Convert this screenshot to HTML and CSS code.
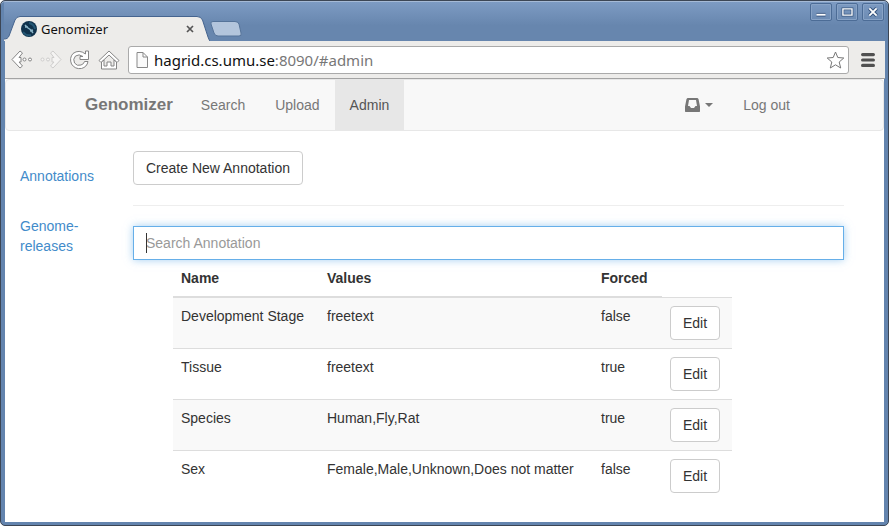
FILE: index.html
```html
<!DOCTYPE html>
<html lang="en">
<head>
<meta charset="utf-8">
<title>Genomizer</title>
<link rel="stylesheet" href="styles.css">
</head>
<body>
<div class="window">
  <header class="titlebar">
    <div class="tab">
      <svg class="tab-shape" viewBox="0 0 206 25" preserveAspectRatio="none" aria-hidden="true">
        <path d="M0 25V23C3 23 4 22 5 20L11 4Q12.500 .5 16 .5H193Q197 .5 198.500 4L204 21Q205 24 206 25Z" fill="#edecea"/>
        <path d="M0 23C3 23 4 22 5 20L11 4Q12.500 .5 16 .5H193Q197 .5 198.500 4L204 21Q205 24 206 25" fill="none" stroke="#45648f"/>
      </svg>
      <svg class="favicon" viewBox="0 0 16 16" aria-hidden="true">
        <circle cx="8" cy="8" r="8" fill="#10324c"/>
        <path d="M2 11Q5 15 10 14M8 2Q13 3 14 8" stroke="#245775" stroke-width="2" fill="none"/>
        <path d="M4 4L7 7L10 9L12 12M4 6L7 6M9 10L12 9" stroke="#8bb5c8" stroke-width="1.500" fill="none"/>
      </svg>
      <span class="tab-title">Genomizer</span>
      <button class="tab-close" aria-label="Close tab"><svg viewBox="0 0 8 8"><path d="M1 1L7 7M7 1L1 7" stroke="#555" stroke-width="1.700"/></svg></button>
    </div>
    <button class="new-tab" aria-label="New tab"><svg viewBox="0 0 32 16"><path d="M3 .5H25Q28 .5 29 3L31 12Q32 15 29 15H8Q5 15 4 12L1 3Q0 .5 3 .5Z" fill="#b3c5dc" stroke="#557399"/></svg></button>
    <div class="window-buttons">
      <button aria-label="Minimize"><svg viewBox="0 0 22 16"><path d="M6 11H16" stroke="#36547d" stroke-width="4"/><path d="M6 11H16" stroke="#fff" stroke-width="2"/></svg></button>
      <button aria-label="Maximize"><svg viewBox="0 0 22 16"><path d="M6.500 4.500H16.500V11.500H6.500Z" stroke="#36547d" stroke-width="3" fill="none"/><path d="M6.500 4.500H16.500V11.500H6.500Z" stroke="#fff" stroke-width="1.500" fill="none"/></svg></button>
      <button aria-label="Close"><svg viewBox="0 0 22 16"><path d="M7 4L15 12M15 4L7 12" stroke="#36547d" stroke-width="4"/><path d="M7 4L15 12M15 4L7 12" stroke="#fff" stroke-width="2"/></svg></button>
    </div>
  </header>

  <div class="toolbar">
    <button class="tool" aria-label="Back"><svg viewBox="0 0 22 20"><g fill="#fff" stroke="#858585"><path d="M9 1L1 9.500L9 18L11.500 16L8 12H10V7.500H8L11.500 3Z"/><circle cx="13.500" cy="9.500" r="1.500"/><circle cx="19" cy="9.500" r="1.500"/></g></svg></button>
    <button class="tool" aria-label="Forward"><svg viewBox="0 0 22 20"><g fill="#f5f4f3" stroke="#cecdcc"><path d="M13 1L21 9.500L13 18L10.500 16L14 12H12V7.500H14L10.500 3Z"/><circle cx="8" cy="9.500" r="1.500"/><circle cx="2.500" cy="9.500" r="1.500"/></g></svg></button>
    <button class="tool" aria-label="Reload"><svg viewBox="0 0 22 20"><path d="M16.500 4V1H19.500V9.500H11V6.500H14Q10 3.500 6.500 6Q3.500 9 5.500 13Q8 16.500 12 15Q15 14 15.500 11.500H19Q18 17 12.500 18.500Q6 19.500 2.500 14Q0 8 4 3.500Q10-1 16.500 4Z" fill="#fff" stroke="#858585"/></svg></button>
    <button class="tool" aria-label="Home"><svg viewBox="0 0 22 20"><path d="M1 10.500L11 1L21 10.500L19 12.500L11 5L3 12.500Z" fill="#fff" stroke="#858585"/><path d="M3.500 12V19H18.500V12L16 10V16H13V12H9V16H6V10Z" fill="#fff" stroke="#858585"/></svg></button>
    <div class="address">
      <svg class="page-icon" viewBox="0 0 12 16" aria-hidden="true"><path d="M1 .5H7L11.500 5V15.500H1ZM7 .5V5H11.500" fill="#fafafa" stroke="#888"/></svg>
      <span class="url">hagrid.cs.umu.se<span class="path">:8090/#admin</span></span>
      <button class="star" aria-label="Bookmark"><svg viewBox="0 0 18 18"><path d="M9 1L11.300 6.500L17.300 7L12.700 11L14.200 17L9 13.800L3.800 17L5.300 11L.7 7L6.700 6.500Z" fill="#fff" stroke="#777" stroke-linejoin="round"/></svg></button>
    </div>
    <button class="menu" aria-label="Menu"><svg viewBox="0 0 13 13"><path d="M1.500 1.500H11.500M1.500 6.500H11.500M1.500 11.500H11.500" stroke="#505050" stroke-width="3" stroke-linecap="round"/></svg></button>
  </div>

  <div class="page">
    <nav class="navbar">
      <a class="brand" href="#">Genomizer</a>
      <a href="#search">Search</a>
      <a href="#upload">Upload</a>
      <a class="active" href="#admin">Admin</a>
      <a class="inbox" href="#inbox" aria-label="Inbox">
        <svg class="inbox-icon" viewBox="0 0 15 14"><path fill-rule="evenodd" d="M2.500 0H12.500L13.500 1L15 8.500V13.500L14.500 14H.5L0 13.500V8.500L1.500 1ZM4 2L3 8H4.500L6 10H9L10.500 8H12L11 2Z" fill="#777"/></svg>
        <svg class="caret" viewBox="0 0 8 4"><path d="M0 0H8L4 4Z" fill="#777"/></svg>
      </a>
      <a class="logout" href="#logout">Log out</a>
    </nav>

    <div class="content">
      <aside class="sidebar">
        <a href="#annotations">Annotations</a>
        <a href="#genome-releases">Genome-releases</a>
      </aside>
      <main class="main">
        <button class="btn">Create New Annotation</button>
        <hr>
        <div class="search">
          <input type="text" placeholder="Search Annotation" aria-label="Search Annotation">
          <span class="cursor"></span>
        </div>
        <table>
          <colgroup><col class="c-name"><col class="c-values"><col class="c-forced"><col class="c-edit"></colgroup>
          <thead><tr><th>Name</th><th>Values</th><th>Forced</th></tr></thead>
          <tbody>
            <tr><td>Development Stage</td><td>freetext</td><td>false</td><td><button class="btn">Edit</button></td></tr>
            <tr><td>Tissue</td><td>freetext</td><td>true</td><td><button class="btn">Edit</button></td></tr>
            <tr><td>Species</td><td>Human,Fly,Rat</td><td>true</td><td><button class="btn">Edit</button></td></tr>
            <tr><td>Sex</td><td>Female,Male,Unknown,Does not matter</td><td>false</td><td><button class="btn">Edit</button></td></tr>
          </tbody>
        </table>
      </main>
    </div>
  </div>
</div>
</body>
</html>
```
FILE: styles.css
```css
* { box-sizing: border-box; }

body {
  margin: 0;
  font: 14px/20px "Liberation Sans", Arial, sans-serif;
  color: #333;
}

a { color: #428bca; text-decoration: none; }
button { font: inherit; color: inherit; }
svg { display: block; }

.window {
  min-height: 100vh;
  display: flex;
  flex-direction: column;
  padding: 0 3px 3px;
  border: 1px solid #3c4655;
  border-radius: 5px;
  background: #6384ae;
  box-shadow: inset 0 1px #a5bad6;
}

/* Title bar */
.titlebar {
  height: 39px;
  display: flex;
  align-items: flex-end;
  background: linear-gradient(#7d9bc3, #6786ae 60%);
  margin-top: 1px;
}

.titlebar button, .tool, .star, .menu {
  border: 0;
  padding: 0;
  background: none;
}

.tab {
  position: relative;
  width: 206px;
  height: 25px;
  display: flex;
  align-items: center;
  padding: 0 16px 0 17px;
}

.tab-shape { position: absolute; inset: 0; width: 100%; height: 100%; }
.favicon { position: relative; width: 16px; height: 16px; }

.tab-title {
  position: relative;
  flex: 1;
  margin-left: 4px;
  font-family: "Noto Sans", sans-serif;
  font-size: 13px;
  color: #111;
}

.tab-close { position: relative; }
.tab-close svg { width: 8px; height: 8px; }
.new-tab { margin: 0 0 4px; }
.new-tab svg { width: 32px; height: 16px; }

.window-buttons {
  align-self: flex-start;
  display: flex;
  gap: 4px;
  margin: 1px 1px 0 auto;
}

.titlebar .window-buttons button {
  border: 1px solid #4c6c96;
  border-radius: 2px;
  box-shadow: inset 0 0 0 1px #88a3c6;
}

.window-buttons svg { width: 20px; height: 16px; }

/* Toolbar */
.toolbar {
  height: 38px;
  display: flex;
  align-items: center;
  margin-left: 1px;
  padding: 0 10px 0 6px;
  background: #edecea;
  border-bottom: 1px solid #a3a3a3;
}

.tool { margin-right: 7px; }
.tool svg { width: 22px; height: 20px; }

.address {
  flex: 1;
  height: 28px;
  display: flex;
  align-items: center;
  padding: 0 3px 0 7px;
  margin-left: 1px;
  background: #fff;
  border: 1px solid #aaa;
  border-radius: 3px;
}

.page-icon { width: 12px; height: 16px; }

.url {
  flex: 1;
  margin-left: 6px;
  font-family: "Noto Sans", sans-serif;
  font-size: 15px;
  color: #111;
}

.path { color: #777; }
.star svg { width: 19px; height: 18px; }
.menu { margin-left: 12px; }
.menu svg { width: 14px; height: 14px; }

/* Page */
.page { flex: 1; background: #fff; margin: 0 1px; }

.navbar {
  display: flex;
  padding: 0 78px 0 64px;
  background: #f8f8f8;
  border: 1px solid #e7e7e7;
  border-radius: 4px;
}

.navbar a { padding: 15px; color: #777; }
.navbar .brand { padding-right: 13px; font-size: 17px; font-weight: bold; }
.navbar .active { color: #555; background: #e7e7e7; }
.navbar .inbox { display: flex; align-items: center; gap: 5px; margin-left: auto; }
.inbox-icon { width: 15px; height: 14px; }
.caret { width: 8px; height: 4px; }

.content { display: flex; padding: 20px 40px 20px 0; }

.sidebar {
  width: 128px;
  flex: none;
  display: flex;
  flex-direction: column;
  gap: 10px;
  padding: 5px 15px 0 0;
}

.sidebar a { padding: 10px 15px; }
.main { flex: 1; }

.btn {
  display: block;
  height: 34px;
  padding: 6px 12px;
  background: #fff;
  border: 1px solid #ccc;
  border-radius: 4px;
}

hr { margin: 20px 0; border: 0; border-top: 1px solid #eee; }
.search { position: relative; }

.search input {
  display: block;
  width: 100%;
  height: 34px;
  padding: 6px 12px;
  font: inherit;
  color: #555;
  border: 1px solid #66afe9;
  border-radius: 0;
  outline: 0;
  box-shadow: 0 0 8px rgba(102, 175, 233, 0.6);
}

.search input::placeholder { color: #999; opacity: 1; }

.cursor {
  position: absolute;
  left: 13px;
  top: 7px;
  width: 1px;
  height: 20px;
  background: #333;
}

table { margin-left: 40px; border-collapse: collapse; table-layout: fixed; width: 559px; }
.c-name { width: 146px; }
.c-values { width: 274px; }
.c-forced { width: 69px; }
.c-edit { width: 70px; }
th, td { padding: 8px; text-align: left; vertical-align: top; }
th { border-bottom: 2px solid #ddd; }
td { border-top: 1px solid #ddd; }
tbody tr:nth-child(odd) { background: #f9f9f9; }
```
